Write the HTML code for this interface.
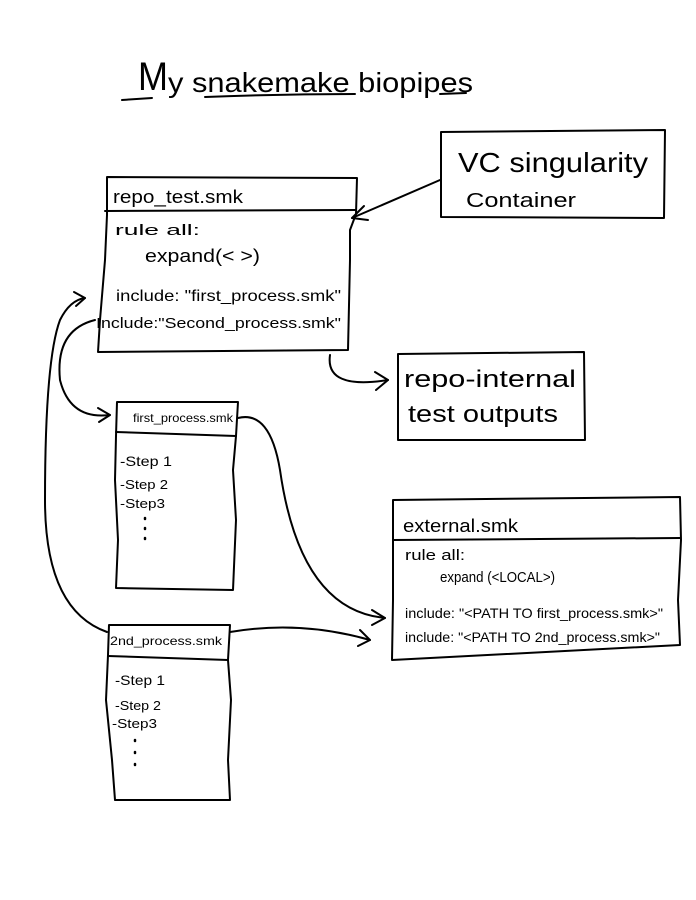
<!DOCTYPE html>
<html><head><meta charset="utf-8"><style>
html,body{margin:0;padding:0;background:#fff;}
svg{display:block}
text{font-family:"Liberation Sans",sans-serif;fill:#000;}
</style></head><body>
<svg width="696" height="900" viewBox="0 0 696 900" xmlns="http://www.w3.org/2000/svg" fill="none" stroke="#000" stroke-width="2" stroke-linecap="round" stroke-linejoin="round">
<!-- title -->
<text x="138" y="90" font-size="40" stroke="none" textLength="30" lengthAdjust="spacingAndGlyphs">M</text>
<text x="168" y="92" font-size="28" stroke="none" textLength="305" lengthAdjust="spacingAndGlyphs">y  snakemake  biopipes</text>
<path d="M122 100 L152 98"/>
<path d="M205 97 Q280 94 355 94"/>
<path d="M440 94 L466 93"/>

<!-- VC box -->
<path d="M441 132 L665 130 L664 218 L441 217 Z"/>
<text x="458" y="172" font-size="28" stroke="none" textLength="190" lengthAdjust="spacingAndGlyphs">VC singularity</text>
<text x="466" y="207" font-size="20" stroke="none" textLength="110" lengthAdjust="spacingAndGlyphs">Container</text>
<path d="M440 180 L352 218"/>
<path d="M352 218 L364 206 M352 218 L368 220"/>

<!-- repo_test box -->
<path d="M107 177 L357 178 L356 214 L350 230 L350 260 L348 350 L98 352 L100 320 L105 260 L107 215 Z"/>
<path d="M105 211 L356 210"/>
<text x="113" y="203" font-size="18" stroke="none" textLength="130" lengthAdjust="spacingAndGlyphs">repo_test.smk</text>
<text x="115" y="235" font-size="15" stroke="none" textLength="85" lengthAdjust="spacingAndGlyphs">rule all:</text>
<text x="145" y="262" font-size="18" stroke="none" textLength="115" lengthAdjust="spacingAndGlyphs">expand(&lt; &gt;)</text>
<text x="116" y="301" font-size="16" stroke="none" textLength="225" lengthAdjust="spacingAndGlyphs">include: "first_process.smk"</text>
<text x="96" y="328" font-size="15" stroke="none" textLength="245" lengthAdjust="spacingAndGlyphs">Include:"Second_process.smk"</text>

<!-- arrow to repo-internal -->
<path d="M330 355 Q325 390 388 380"/>
<path d="M388 380 L375 372 M388 380 L376 390"/>
<path d="M398 354 L584 352 L585 440 L398 440 Z"/>
<text x="404" y="387" font-size="24" stroke="none" textLength="172" lengthAdjust="spacingAndGlyphs">repo-internal</text>
<text x="408" y="422" font-size="24" stroke="none" textLength="150" lengthAdjust="spacingAndGlyphs">test outputs</text>

<!-- first_process box -->
<path d="M117 402 L238 402 L236 436 L233 470 L236 520 L233 590 L116 588 L118 540 L115 480 L116 436 Z"/>
<path d="M116 432 L236 436"/>
<text x="133" y="422" font-size="12" stroke="none" textLength="100" lengthAdjust="spacingAndGlyphs">first_process.smk</text>
<text x="120" y="466" font-size="14" stroke="none" textLength="52" lengthAdjust="spacingAndGlyphs">-Step 1</text>
<text x="120" y="489" font-size="13" stroke="none" textLength="48" lengthAdjust="spacingAndGlyphs">-Step 2</text>
<text x="120" y="508" font-size="13" stroke="none" textLength="45" lengthAdjust="spacingAndGlyphs">-Step3</text>
<path d="M145 518 v1 M145 528 v1 M145 538 v1" stroke-width="2.5"/>

<!-- 2nd_process box -->
<path d="M109 625 L230 625 L228 660 L231 700 L228 760 L230 800 L115 800 L112 760 L106 700 L108 655 Z"/>
<path d="M108 656 L228 660"/>
<text x="110" y="645" font-size="12" stroke="none" textLength="112" lengthAdjust="spacingAndGlyphs">2nd_process.smk</text>
<text x="115" y="685" font-size="14" stroke="none" textLength="50" lengthAdjust="spacingAndGlyphs">-Step 1</text>
<text x="115" y="710" font-size="13" stroke="none" textLength="46" lengthAdjust="spacingAndGlyphs">-Step 2</text>
<text x="112" y="728" font-size="13" stroke="none" textLength="45" lengthAdjust="spacingAndGlyphs">-Step3</text>
<path d="M135 740 v1 M135 752 v1 M135 764 v1" stroke-width="2.5"/>

<!-- external box -->
<path d="M393 500 L680 497 L681 540 L678 600 L680 645 L392 660 L393 600 Z"/>
<path d="M393 540 L680 538"/>
<text x="403" y="532" font-size="18" stroke="none" textLength="115" lengthAdjust="spacingAndGlyphs">external.smk</text>
<text x="405" y="560" font-size="15" stroke="none" textLength="60" lengthAdjust="spacingAndGlyphs">rule all:</text>
<text x="440" y="582" font-size="15" stroke="none" textLength="115" lengthAdjust="spacingAndGlyphs">expand (&lt;LOCAL&gt;)</text>
<text x="405" y="618" font-size="14" stroke="none" textLength="258" lengthAdjust="spacingAndGlyphs">include: "&lt;PATH TO first_process.smk&gt;"</text>
<text x="405" y="642" font-size="14" stroke="none" textLength="255" lengthAdjust="spacingAndGlyphs">include: "&lt;PATH TO 2nd_process.smk&gt;"</text>

<!-- arrows from process boxes to external -->
<path d="M238 418 Q270 410 280 470 Q300 610 385 618"/>
<path d="M385 618 L372 610 M385 618 L372 625"/>
<path d="M230 632 Q300 620 370 640"/>
<path d="M370 640 L360 630 M370 640 L358 646"/>

<!-- left side arrows -->
<path d="M95 320 Q55 330 60 380 Q70 420 110 415"/>
<path d="M110 415 L98 408 M110 415 L99 422"/>
<path d="M107 632 Q45 610 45 500 Q45 360 60 320 Q70 300 85 298"/>
<path d="M85 298 L74 292 M85 298 L76 306"/>
</svg>
</body></html>
